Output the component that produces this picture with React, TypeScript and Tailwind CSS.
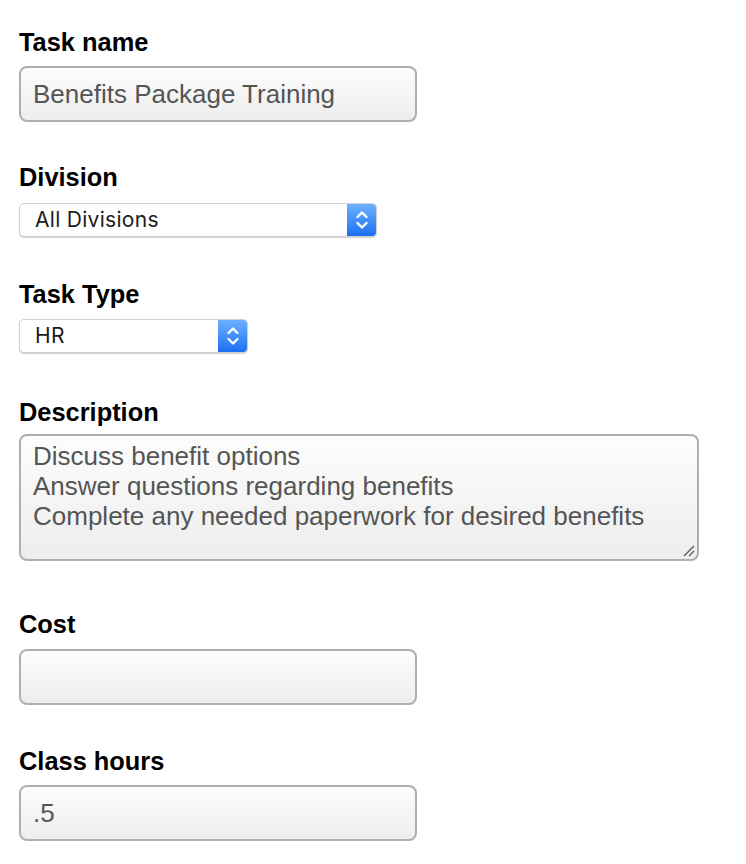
import React from "react"

function Label({ children, className }: { children: React.ReactNode; className?: string }) {
  return (
    <label className={"block h-[28px] text-[25.4px] leading-[28px] font-bold text-black " + (className ?? "")}>
      {children}
    </label>
  )
}

function TextBox({ value, className }: { value: string; className?: string }) {
  return (
    <input
      readOnly
      value={value}
      className={
        "block h-[56px] w-[398px] rounded-[8px] border-2 border-[#afafaf] bg-linear-to-b from-[#fdfdfd] to-[#ededed] px-[12px] text-[26px] text-[#555] outline-none " +
        (className ?? "")
      }
    />
  )
}

function Chevrons() {
  return (
    <svg width="14" height="22" viewBox="0 0 14 22" fill="none" stroke="white" strokeWidth="2.4" strokeLinecap="round" strokeLinejoin="round">
      <path d="M2.5 8 L7 3.5 L11.5 8" />
      <path d="M2.5 14 L7 18.5 L11.5 14" />
    </svg>
  )
}

function Select({ value, className }: { value: string; className?: string }) {
  return (
    <div
      className={
        "flex h-[34px] items-stretch overflow-hidden rounded-[5px] border border-[#cfcfcf] bg-white shadow-[0_1px_1px_rgba(0,0,0,0.18)] " +
        (className ?? "")
      }
    >
      <span className="flex flex-1 items-center pl-[15px] font-['Inter',sans-serif] text-[21px] tracking-[0.3px] text-[#1c1c1c]">{value}</span>
      <span className="flex w-[29px] items-center justify-center bg-linear-to-b from-[#6cb0ff] to-[#1a6ff2]">
        <Chevrons />
      </span>
    </div>
  )
}

export default function App() {
  return (
    <div className="min-h-screen bg-white px-[19px] pt-[28px] font-['Liberation_Sans',Arial,sans-serif]">
      <Label>Task name</Label>
      <TextBox value="Benefits Package Training" className="mt-[10px]" />

      <Label className="mt-[41px]">Division</Label>
      <Select value="All Divisions" className="mt-[12px] w-[358px]" />

      <Label className="mt-[43px]">Task Type</Label>
      <Select value="HR" className="mt-[11px] w-[229px]" />

      <Label className="mt-[45px]">Description</Label>
      <div className="relative mt-[8px] w-[680px]">
        <textarea
          readOnly
          rows={4}
          value={"Discuss benefit options\nAnswer questions regarding benefits\nComplete any needed paperwork for desired benefits"}
          className="block h-[127px] w-full resize-none rounded-[8px] border-2 border-[#afafaf] bg-linear-to-b from-[#fdfdfd] to-[#ededed] px-[12px] pt-[5px] text-[26px] leading-[30px] text-[#555] outline-none"
        />
        <svg className="absolute right-[4px] bottom-[4px]" width="12" height="12" viewBox="0 0 12 12" stroke="#555" strokeWidth="1.2">
          <path d="M1 11 L11 1" />
          <path d="M6 11 L11 6" />
        </svg>
      </div>

      <Label className="mt-[49px]">Cost</Label>
      <TextBox value="" className="mt-[11px]" />

      <Label className="mt-[42px]">Class hours</Label>
      <TextBox value=".5" className="mt-[10px]" />
    </div>
  )
}
